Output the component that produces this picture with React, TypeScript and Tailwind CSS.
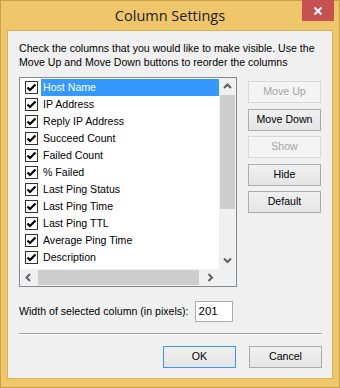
const columns = [
  "Host Name",
  "IP Address",
  "Reply IP Address",
  "Succeed Count",
  "Failed Count",
  "% Failed",
  "Last Ping Status",
  "Last Ping Time",
  "Last Ping TTL",
  "Average Ping Time",
  "Description",
];

const sideButtons = [
  { label: "Move Up", disabled: true },
  { label: "Move Down", disabled: false },
  { label: "Show", disabled: true },
  { label: "Hide", disabled: false },
  { label: "Default", disabled: false },
];

function Chevron({ dir }: { dir: "up" | "down" | "left" | "right" }) {
  const paths = {
    up: "M1 5 L4.5 1.5 L8 5",
    down: "M1 1.5 L4.5 5 L8 1.5",
    left: "M5 1 L1.5 4.5 L5 8",
    right: "M1.5 1 L5 4.5 L1.5 8",
  };
  const vertical = dir === "up" || dir === "down";
  return (
    <svg
      width={vertical ? 9 : 7}
      height={vertical ? 7 : 9}
      viewBox={vertical ? "0 0 9 7" : "0 0 7 9"}
    >
      <path d={paths[dir]} fill="none" stroke="#606060" strokeWidth="2" />
    </svg>
  );
}

function CheckBox() {
  return (
    <div className="w-[13px] h-[13px] border border-[#333333] bg-white flex items-center justify-center shrink-0">
      <svg width="11" height="11" viewBox="0 0 11 11">
        <path d="M1.5 5.5 L4 8 L9.5 2.5" fill="none" stroke="#000" strokeWidth="2.2" />
      </svg>
    </div>
  );
}

function WinButton({ label, disabled, primary }: { label: string; disabled?: boolean; primary?: boolean }) {
  return (
    <div
      className={
        disabled
          ? "w-[73px] h-[22px] border border-[#d9d9d9] bg-[#f4f4f4] text-[#a3a3a3] flex items-center justify-center"
          : primary
          ? "w-[73px] h-[22px] border border-[#3399ff] bg-gradient-to-b from-[#f0f0f0] to-[#e5e5e5] text-black flex items-center justify-center"
          : "w-[73px] h-[22px] border border-[#acacac] bg-gradient-to-b from-[#f0f0f0] to-[#e5e5e5] text-black flex items-center justify-center"
      }
    >
      {label}
    </div>
  );
}

export default function App() {
  return (
    <div className="w-[340px] h-[388px] bg-[#efc66a] border border-[#c9a04a] flex flex-col font-['Liberation_Sans',Arial,sans-serif] text-[10.6px] text-black">
      {/* title bar */}
      <div className="relative h-[29px] shrink-0 flex items-center justify-center">
        <span className="font-['Open_Sans',sans-serif] text-[14.5px] text-[#1b1b1b]">Column Settings</span>
        <div className="absolute right-[5px] top-[-1px] w-[32px] h-[21px] bg-[#c75050] flex items-center justify-center">
          <svg width="10" height="10" viewBox="0 0 10 10">
            <path d="M1.5 1.5 L8.5 8.5 M8.5 1.5 L1.5 8.5" stroke="#fff" strokeWidth="2" />
          </svg>
        </div>
      </div>

      {/* client area */}
      <div className="flex-1 mx-[6px] mb-[8px] border border-[#d6b25c] bg-[#f0f0f0] pl-[11px] pr-[10px] pt-[11px] flex flex-col">
        <p className="leading-[13.5px] whitespace-nowrap">
          Check the columns that you would like to make visible. Use the
          <br />
          Move Up and Move Down buttons to reorder the columns
        </p>

        <div className="flex mt-[8px] gap-[11px]">
          {/* list view */}
          <div className="w-[218px] h-[210px] border border-[#828790] bg-white flex flex-col">
            <div className="flex flex-1 min-h-0">
              <div className="flex-1 pt-px flex flex-col">
                {columns.map((c, i) => (
                  <div key={c} className="h-[17px] flex items-center">
                    <div className="ml-[5px] mr-[3px]">
                      <CheckBox />
                    </div>
                    <div
                      className={
                        i === 0
                          ? "h-full flex-1 bg-[#3399ff] text-white pl-[2px] flex items-center"
                          : "h-full flex-1 pl-[2px] flex items-center"
                      }
                    >
                      {c}
                    </div>
                  </div>
                ))}
              </div>
              {/* vertical scrollbar */}
              <div className="w-[17px] bg-[#f0f0f0] flex flex-col">
                <div className="h-[17px] flex items-center justify-center">
                  <Chevron dir="up" />
                </div>
                <div className="flex-1 px-px">
                  <div className="h-[114px] bg-[#cdcdcd]" />
                </div>
                <div className="h-[17px] flex items-center justify-center">
                  <Chevron dir="down" />
                </div>
              </div>
            </div>
            {/* horizontal scrollbar */}
            <div className="h-[17px] flex shrink-0">
              <div className="flex-1 bg-[#f0f0f0] flex">
                <div className="w-[17px] flex items-center justify-center">
                  <Chevron dir="left" />
                </div>
                <div className="flex-1 py-px">
                  <div className="h-full w-[161px] ml-px bg-[#cdcdcd]" />
                </div>
                <div className="w-[17px] flex items-center justify-center">
                  <Chevron dir="right" />
                </div>
              </div>
              <div className="w-[17px] bg-[#f0f0f0]" />
            </div>
          </div>

          {/* side buttons */}
          <div className="flex flex-col gap-[5.5px] pt-[4px]">
            {sideButtons.map((b) => (
              <WinButton key={b.label} label={b.label} disabled={b.disabled} />
            ))}
          </div>
        </div>

        <div className="flex items-center mt-[14px]">
          <span>Width of selected column (in pixels):</span>
          <div className="ml-[6px] w-[38px] h-[21px] border border-[#abadb3] bg-white pl-[3px] flex items-center text-[11.5px]">
            201
          </div>
        </div>

        <div className="mt-[11px] h-[2px] border-t border-[#a0a0a0] border-b border-b-white" />

        <div className="flex justify-end gap-[13px] mt-[11px]">
          <WinButton label="OK" primary />
          <WinButton label="Cancel" />
        </div>
      </div>
    </div>
  );
}
